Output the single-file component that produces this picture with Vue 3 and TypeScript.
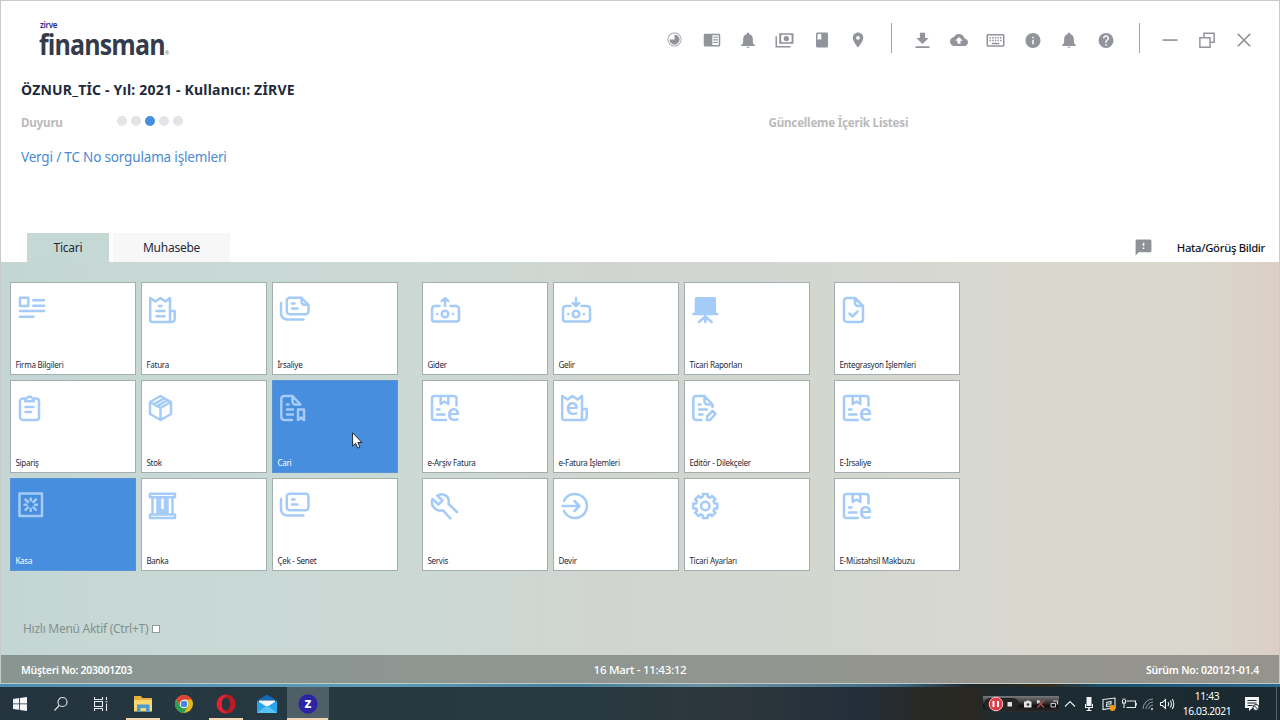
<template>
  <div class="desktop">
    <div class="window">
      <header class="topbar">
        <div class="logo">
          <span class="logo-small">zirve</span>
          <span class="logo-main">finansman</span>
          <span class="logo-reg">®</span>
        </div>
        <nav class="tools">
          <template v-for="(tool, i) in tools" :key="i">
            <span v-if="tool.divider" class="divider"></span>
            <button class="tool" type="button">
              <svg viewBox="0 0 24 24" :class="tool.cls">
                <path :d="tool.d" fill-rule="evenodd" />
              </svg>
            </button>
          </template>
        </nav>
      </header>

      <h1 class="company">ÖZNUR_TİC - Yıl: 2021 - Kullanıcı: ZİRVE</h1>

      <section class="news">
        <div class="news-left">
          <div class="news-head">
            <span class="muted duyuru">Duyuru</span>
            <span class="dots">
              <i v-for="n in 5" :key="n" class="dot" :class="{ active: n === 3 }"></i>
            </span>
          </div>
          <a class="news-link">Vergi / TC No sorgulama işlemleri</a>
        </div>
        <div class="news-right">
          <span class="muted">Güncelleme İçerik Listesi</span>
        </div>
      </section>

      <div class="tabs">
        <div class="tab ticari active"><span>Ticari</span></div>
        <div class="tab muhasebe"><span>Muhasebe</span></div>
        <div class="feedback">
          <svg viewBox="0 0 24 24"><path d="M20 2H4c-1.1 0-2 .9-2 2v18l4-4h14c1.1 0 2-.9 2-2V4c0-1.100-.9-2-2-2zm-7 12h-2v-2h2v2zm0-4h-2V6h2v4z" /></svg>
          <span>Hata/Görüş Bildir</span>
        </div>
      </div>

      <main class="panel">
        <div class="groups">
          <div v-for="(group, g) in groups" :key="g" class="group" :class="{ single: group.length === 3 }">
            <div v-for="tile in group" :key="tile.label" class="tile" :class="{ selected: tile.selected }">
              <svg class="tile-icon" viewBox="0 0 36 36" width="36" height="36">
                <path class="line" :d="icons[tile.icon].d" />
                <path v-if="icons[tile.icon].fill" class="solid" :d="icons[tile.icon].fill" />
                <text v-if="icons[tile.icon].e" class="letter" :x="icons[tile.icon].e?.[0]" :y="icons[tile.icon].e?.[1]">e</text>
              </svg>
              <span class="tile-label">{{ tile.label }}</span>
            </div>
          </div>
        </div>
        <label class="quick">
          <span>Hızlı Menü Aktif (Ctrl+T)</span>
          <i class="check"></i>
        </label>
      </main>

      <footer class="status">
        <span class="customer">Müşteri No: 203001Z03</span>
        <span class="date">16 Mart - 11:43:12</span>
        <span class="version">Sürüm No: 020121-01.4</span>
      </footer>
    </div>

    <div class="taskbar">
      <div class="apps">
        <div class="app">
          <svg width="16" height="16" viewBox="0 0 16 16"><path fill="#f4f6f7" d="M1 3l6-.9v5.400H1zM7.800 2L15 1v6.500H7.800zM1 8.300h6v5.400L1 12.900zM7.800 8.300H15V15l-7.200-1z" /></svg>
        </div>
        <div class="app">
          <svg width="16" height="16" viewBox="0 0 16 16" class="thin"><circle cx="9.500" cy="6" r="4.500" /><path d="M6.200 9.500L1.500 14.500" /></svg>
        </div>
        <div class="app">
          <svg width="16" height="16" viewBox="0 0 16 16" class="thin"><path d="M.500 1v2.500h8V1M.500 15v-2.500h8V15M.500 5.500h8v5h-8zM12.500 1v3M12.500 7.500V15M11.500 5.800h2" /></svg>
        </div>
        <div class="app open">
          <svg width="20" height="18" viewBox="0 0 20 18">
            <path fill="#e9ae3b" d="M1 1h7l1.500 2H19v5H1z" />
            <path fill="#fbd76f" d="M1 5h18v11.500H1z" />
            <path fill="#4a9bd4" d="M4 9.500h12.500V17H13v-4H7.500v4H4z" />
          </svg>
        </div>
        <div class="app">
          <svg width="20" height="20" viewBox="0 0 20 20">
            <circle cx="10" cy="10" r="9" fill="#e2b71f" />
            <path fill="#dc4437" d="M2.200 5.500A9 9 0 0 1 17.800 5.500H10L6.100 12.200z" />
            <path fill="#2f9e55" d="M2.200 5.500A9 9 0 0 0 10 19l3.900-6.800H6.100z" />
            <circle cx="10" cy="10" r="4.300" fill="#fff" /><circle cx="10" cy="10" r="3.300" fill="#4386e8" />
          </svg>
        </div>
        <div class="app open">
          <svg width="20" height="20" viewBox="0 0 20 20">
            <path fill="#e5222e" fill-rule="evenodd" d="M10 .500a9.500 9.500 0 1 0 0 19a9.500 9.500 0 0 0 0-19zM10 3.200c2.600 0 4.200 3 4.200 6.800s-1.600 6.800-4.200 6.800S5.800 13.800 5.800 10s1.600-6.800 4.200-6.800z" />
            <path fill="#b81a26" d="M13 1.100A9.500 9.500 0 0 1 13 18.900c-1.500.3-3-.5-3.900-2.200c3 .6 5.100-2.700 5.100-6.700s-2.100-7.300-5.100-6.700C10 1.600 11.500.800 13 1.100z" />
          </svg>
        </div>
        <div class="app">
          <svg width="22" height="20" viewBox="0 0 22 20">
            <path fill="#1569b3" d="M1 6.500L11 .500l10 6z" />
            <path fill="#f2f6fa" d="M3 6.500h16v6H3z" />
            <path fill="#2aa3ea" d="M1 6.500l10 6.500 10-6.500V19H1z" />
            <path fill="#56c4f7" d="M1 19l9-7 2 0 9 7z" />
          </svg>
        </div>
        <div class="app open current">
          <svg width="20" height="20" viewBox="0 0 20 20">
            <circle cx="10" cy="10" r="9.700" fill="#2b24a5" />
            <text x="10" y="14" class="zed">z</text>
          </svg>
        </div>
      </div>

      <div class="tray">
        <div class="recorder">
          <svg width="76" height="16" viewBox="0 0 76 16">
            <rect x="1" y="2" width="35" height="12" rx="6" fill="#252525" />
            <circle cx="13" cy="8" r="6.800" fill="#e23c46" stroke="#f3c4c6" />
            <path d="M10.500 5v6M15 5v6" stroke="#fff" stroke-width="2" />
            <path fill="#e4e4e4" d="M24.500 6h4.500v4.500h-4.500zM41 5.500h2l1-1h2l1 1h1.500v6H41z" />
            <circle cx="45" cy="8.500" r="1.300" fill="#333" />
            <path d="M54 4.500l4 4 3 3M61.500 4l-7 7.500" stroke="#c65050" stroke-width="1.200" />
            <path d="M54 4v4l4-3z" fill="#ddd" />
            <path d="M68 7.500h4.500v3.500H68zM70 5h4.500v3.500" stroke="#ccc" fill="none" />
          </svg>
        </div>
        <svg class="thin chevron" width="12" height="16" viewBox="0 0 12 16"><path d="M1 10.500l5-5 5 5" /></svg>
        <svg class="mic" width="12" height="16" viewBox="0 0 12 16"><path fill="#eef1f3" d="M3.500 1h5v9h-5zM2 8h1v3h6V8h1v4H6.800v2H8.500v1h-5v-1h1.700v-2H2z" /></svg>
        <svg class="thin" width="16" height="16" viewBox="0 0 16 16"><path d="M2 3.500l12-1.500v9.500L2 13.500zM5 6.500l5-1v2.500H5.500v2.500l5-.5" /><circle cx="11.500" cy="12" r="3" fill="#f39a1d" stroke="none" /></svg>
        <svg class="thin" width="16" height="16" viewBox="0 0 16 16"><path d="M5.500 5h9v6.500h-9M15.300 7v2.500M1.500 4v3h3V4M3 7v5M2.200 2.500V4M3.900 2.500V4" /></svg>
        <svg class="wifi" width="14" height="16" viewBox="0 0 14 16"><path d="M2 13A10 10 0 0 1 12 3M5 13a7.500 7.500 0 0 1 7-7M7.500 13A5 5 0 0 1 12 9" /><circle cx="11" cy="13" r="1.200" /></svg>
        <svg class="thin" width="16" height="16" viewBox="0 0 16 16"><path d="M1.500 6.500h2l3-3v9l-3-3h-2zM9 6q1.300 2 0 4M11.300 4.500q2.200 3.500 0 7M13.300 3q3 5 0 10" /></svg>
        <div class="clock"><span>11:43</span><span>16.03.2021</span></div>
        <svg class="notify" width="16" height="16" viewBox="0 0 16 16">
          <path fill="#f3f5f6" d="M1 1h14v11H8.500L5 15v-3H1z" />
          <path d="M3.500 4.500h9M3.500 7h9M3.500 9.500h5" stroke="#1c2930" />
          <circle cx="12" cy="11.500" r="3" fill="#f3f5f6" stroke="#1c2930" /><path d="M10 9.500l4 4" stroke="#1c2930" />
        </svg>
        <i class="peek"></i>
      </div>
    </div>

    <svg class="cursor" width="12" height="18" viewBox="0 0 12 18">
      <path d="M.600.800v13.300l3-2.800 2.100 4.800 2.200-1-2.100-4.600h4.100z" />
    </svg>
  </div>
</template>

<script setup lang="ts">
interface Tool {
  d: string
  cls?: string
  divider?: boolean
}

interface Icon {
  d: string
  fill?: string
  e?: [number, number]
}

interface Tile {
  label: string
  icon: string
  selected?: boolean
}

const bell = 'M12 22.500c1.100 0 2-.7 2-1.500h-4c0 .8.9 1.500 2 1.500zM18.500 16v-5.500c0-3.100-2-5.700-5-6.400V3.500a1.500 1.500 0 0 0-3 0v.6c-3 .7-5 3.300-5 6.400V16l-2.500 2.500V20h18v-1.500z'

const tools: Tool[] = [
  { cls: 'pie', d: 'M12 .8a11.200 11.200 0 1 0 0 22.400a11.200 11.200 0 0 0 0-22.400zM12 2a10 10 0 1 1 0 20a10 10 0 0 1 0-20zM12 3.800V12H3.800A8.200 8.200 0 1 0 12 3.800z' },
  { d: 'M3 3.500h18c1.100 0 2 .9 2 2v13c0 1.100-.9 2-2 2H3c-1.100 0-2-.9-2-2v-13c0-1.100.9-2 2-2zM12.500 5.500v13H21v-13zM13.500 7.500H20V9h-6.500zM13.500 11H20v1.500h-6.500zM13.500 14.500H20V16h-6.500z' },
  { d: bell },
  { cls: 'wide', d: 'M5 3h19v14H5zM7.500 7v6A2 2 0 0 0 9 15h11a2 2 0 0 0 1.500-2V7A2 2 0 0 0 20 5H9a2 2 0 0 0-1.500 2zM14.500 6.500a3.500 3.500 0 1 1 0 7a3.500 3.500 0 0 1 0-7zM0 7h2v13h18v2H0z' },
  { d: 'M18 2H6c-1.100 0-2 .9-2 2v16c0 1.100.9 2 2 2h12c1.100 0 2-.9 2-2V4c0-1.100-.9-2-2-2zM6 4h5v8l-2.500-1.500L6 12V4z' },
  { d: 'M12 2C8.130 2 5 5.130 5 9c0 5.250 7 13 7 13s7-7.750 7-13c0-3.870-3.130-7-7-7zm0 9.500a2.500 2.500 0 0 1 0-5a2.500 2.500 0 0 1 0 5z' },
  { divider: true, cls: 'big', d: 'M19 9h-4V3H9v6H5l7 7 7-7zM4 18.500v2h16v-2H4z' },
  { d: 'M19.350 10.040C18.670 6.590 15.640 4 12 4 9.110 4 6.600 5.640 5.350 8.040 2.340 8.360 0 10.910 0 14c0 3.310 2.690 6 6 6h13c2.760 0 5-2.240 5-5 0-2.640-2.050-4.780-4.650-4.960zM14 13v4h-4v-4H7l5-5 5 5h-3z' },
  { cls: 'wide', d: 'M22 4H2C.9 4 0 4.900 0 6v13c0 1.100.9 2 2 2h20c1.100 0 2-.9 2-2V6c0-1.100-.9-2-2-2zM2 6h20v13H2zM4 8h2v2H4zM7.500 8h2v2h-2zM11 8h2v2h-2zM14.500 8h2v2h-2zM18 8h2v2h-2zM4 11.500h2v2H4zM7.500 11.500h2v2h-2zM11 11.500h2v2h-2zM14.500 11.500h2v2h-2zM18 11.500h2v2h-2zM7 15.500h10v2H7z' },
  { d: 'M12 2.500C6.480 2.500 2 7 2 12.500s4.480 10 10 10 10-4.480 10-10-4.480-10-10-10zm1 15h-2v-6h2v6zm0-8h-2v-2h2v2z' },
  { d: bell },
  { d: 'M12 2.500a10 10 0 1 0 0 20a10 10 0 0 0 0-20zm1 17h-2v-2h2v2zm2.070-7.750l-.9.920C13.450 13.400 13 14 13 15.500h-2v-.5c0-1.100.450-2.100 1.170-2.830l1.240-1.260c.370-.360.590-.860.590-1.410 0-1.100-.9-2-2-2s-2 .9-2 2H8c0-2.210 1.790-4 4-4s4 1.790 4 4c0 .880-.360 1.680-.930 2.250z' },
  { divider: true, d: 'M2 11h20v2.200H2z' },
  { d: 'M7 2h15.500v14H17v6.500H1.500V8H7zM9 4v4h8v6h3.500V4zM3.500 10v10.500H15V10z' },
  { d: 'M4.500 3L12 10.500 19.500 3 21 4.500 13.500 12 21 19.500 19.500 21 12 13.500 4.500 21 3 19.500 10.500 12 3 4.500z' },
]

// toothed outline for the settings tile
const gear = (cx: number, cy: number): string => {
  const pts: string[] = []
  for (let i = 0; i < 8; i++) {
    const base = (i * Math.PI) / 4
    const steps: [number, number][] = [[-0.25, 9.6], [-0.2, 12.2], [0.2, 12.2], [0.25, 9.6]]
    for (const [a, r] of steps) {
      pts.push(`${(cx + r * Math.sin(base + a)).toFixed(2)} ${(cy - r * Math.cos(base + a)).toFixed(2)}`)
    }
  }
  return `M${pts.join('L')}z`
}

const receipt = 'M3.200 4v22a2 2 0 0 0 2 2h19.500a3 3 0 0 0 3-3v-8h-4.700M23 28V4l-4.500 3.500-5-3.500-5 3.500L3.200 4'
const archive = 'M18 28H6.500a2.500 2.500 0 0 1-2.500-2.500v-19A2.500 2.500 0 0 1 6.500 4h19.500A2.500 2.500 0 0 1 28.500 6.500v7M12.700 4v8l3.800-2.500 3.800 2.500V4M9 17.500h2.500M9 22.500h7.500'
const backPage = 'M3 9v10.500a6 6 0 0 0 6 6h16.500'
const card = 'M11.500 12H6.700a2.700 2.700 0 0 0-2.700 2.700v10.200a2.700 2.700 0 0 0 2.700 2.700h21.600a2.700 2.700 0 0 0 2.700-2.700V14.700a2.700 2.700 0 0 0-2.700-2.700H22.500M20.300 20a3.300 3.300 0 1 1-6.600 0a3.300 3.300 0 1 1 6.600 0zM9.300 20h.100M25 20h.100'

const icons: Record<string, Icon> = {
  firma: { d: 'M4 3.800h8.300v8.300H4zM17.300 6.300H28M17.300 11.700H28M4 17H28M4 22.700H17.500' },
  fatura: { d: receipt + 'M12 12h2.500M9.500 17h8M9.500 22.300h8' },
  irsaliye: { d: backPage + 'M11.500 3.800H23.500l7 7.200v6.500a2.700 2.700 0 0 1-2.700 2.700H11.500a2.700 2.700 0 0 1-2.700-2.700v-11a2.700 2.700 0 0 1 2.700-2.700zM23.500 3.800v4a3 3 0 0 0 3 3h4M14 9.500h2.500M14 14.500h5.500' },
  siparis: { d: 'M9 6.500H6.700A2.700 2.700 0 0 0 4 9.200v16.100A2.700 2.700 0 0 0 6.700 28H20.300A2.700 2.700 0 0 0 23 25.300V9.200a2.700 2.700 0 0 0-2.700-2.700H18M9.200 9.200V6.500h1.500a3 3 0 0 1 5.600 0h1.500v2.700zM9.500 15h8M9.500 20h5.500' },
  stok: { d: 'M13.500 4l10.500 6v12l-10.500 6L3 22V10zM3 10l10.500 6L24 10M13.500 16v12M7 12.200l10.500-6M10.200 14.200l10.500-6' },
  cari: { d: 'M14 28H6a2.700 2.700 0 0 1-2.700-2.700V6.700A2.700 2.700 0 0 1 6 4h8.500l8 8.500H17.500a3 3 0 0 1-3-3V4M9 12.500h1.500M9 17.500h6M9 22.500h6M20 17.500h6V28l-3-2.500-3 2.500z' },
  kasa: { d: 'M3.500 3.500h22.500v22.500H3.500zM14.700 8.500v2M14.700 19v2M8.500 14.700h2M19 14.700h2M9.500 9.500l2.500 2.500M19.900 9.500l-2.500 2.500M9.500 19.900l2.500-2.500M19.900 19.900l-2.500-2.500' },
  banka: { d: 'M3 3.800h25v3.500H3zM3 24.500h25v3.500H3zM5.500 7.500v17M10.500 7.500v17M13 7.500v17M18 7.500v17M20.500 7.500v17M25.500 7.500v17', fill: 'M14 19h3v5h-3z' },
  cek: { d: backPage + 'M11.500 3.800H27.700a2.700 2.700 0 0 1 2.700 2.700v11a2.700 2.700 0 0 1-2.700 2.700H11.500a2.700 2.700 0 0 1-2.700-2.700v-11a2.700 2.700 0 0 1 2.700-2.700zM14 9.500h2.500M14 14.500h5.500' },
  gider: { d: card + 'M17 12V4.200M13.700 7.200l3.300-3 3.300 3' },
  gelir: { d: card + 'M17 4v8M13.700 9l3.300 3 3.300-3' },
  rapor: { d: 'M15.300 20v8M15.300 22.500L9 28M15.300 22.500l6.300 5.500M3.300 20h24', fill: 'M4.700 5a2 2 0 0 1 2-2H24a2 2 0 0 1 2 2v15H4.700z' },
  arsiv: { d: archive, e: [25.3, 28.8] },
  efatura: { d: receipt, e: [13.2, 22.8] },
  editor: { d: 'M11.500 28H6a2.700 2.700 0 0 1-2.700-2.700V6.700A2.700 2.700 0 0 1 6 4h8.500l8 8.500H17.500a3 3 0 0 1-3-3V4M22.500 12.500V15M9 12.500h1.500M9 17.500h8M9 22.500h3.500M17 28v-3.500l5.500-5.500 3 3-5.500 6z' },
  servis: { d: 'M4.500 9l6 5.500 4-4L9.300 5.500c6-3.500 13 1 11.200 8.500L29 22M4.500 9c-2.500 7 3.500 13 10.500 11.300L22.500 28.500' },
  devir: { d: 'M5 11A12 12 0 1 1 5 21M3.500 16h17M15.500 11l5 5-5 5' },
  ayarlar: { d: gear(15.300, 16) + 'M19.500 16a4.200 4.200 0 1 1-8.400 0a4.200 4.200 0 1 1 8.400 0z' },
  entegrasyon: { d: 'M15 4H6.700A2.700 2.700 0 0 0 4 6.700v18.600A2.700 2.700 0 0 0 6.700 28h13.600a2.700 2.700 0 0 0 2.700-2.700V12zM15 4v5a3 3 0 0 0 3 3h5M9.500 19.500l3 3 5-5' },
}

const groups: Tile[][] = [
  [
    { label: 'Firma Bilgileri', icon: 'firma' },
    { label: 'Fatura', icon: 'fatura' },
    { label: 'İrsaliye', icon: 'irsaliye' },
    { label: 'Sipariş', icon: 'siparis' },
    { label: 'Stok', icon: 'stok' },
    { label: 'Cari', icon: 'cari', selected: true },
    { label: 'Kasa', icon: 'kasa', selected: true },
    { label: 'Banka', icon: 'banka' },
    { label: 'Çek - Senet', icon: 'cek' },
  ],
  [
    { label: 'Gider', icon: 'gider' },
    { label: 'Gelir', icon: 'gelir' },
    { label: 'Ticari Raporları', icon: 'rapor' },
    { label: 'e-Arşiv Fatura', icon: 'arsiv' },
    { label: 'e-Fatura İşlemleri', icon: 'efatura' },
    { label: 'Editör - Dilekçeler', icon: 'editor' },
    { label: 'Servis', icon: 'servis' },
    { label: 'Devir', icon: 'devir' },
    { label: 'Ticari Ayarları', icon: 'ayarlar' },
  ],
  [
    { label: 'Entegrasyon İşlemleri', icon: 'entegrasyon' },
    { label: 'E-İrsaliye', icon: 'arsiv' },
    { label: 'E-Müstahsil Makbuzu', icon: 'arsiv' },
  ],
]
</script>

<style>
body {
  margin: 0;
  overflow: hidden;
}
</style>

<style scoped>
.desktop {
  position: relative;
  width: 1280px;
  height: 720px;
  display: flex;
  flex-direction: column;
  font-family: 'Noto Sans', 'Open Sans', sans-serif;
  color: #1d2a3c;
  background: #fff;
  overflow: hidden;
  white-space: nowrap;
}

.window {
  height: 684px;
  box-sizing: border-box;
  border: 1px solid #c6caca;
  border-bottom-color: #c4ccc8;
  display: flex;
  flex-direction: column;
}

.topbar {
  height: 76px;
  display: flex;
  justify-content: space-between;
}

.logo {
  display: grid;
  grid-template-columns: 125px 10px;
  grid-template-rows: 10px 28px;
  padding: 19px 0 0 38px;
}

.logo-small {
  grid-column: 1 / 3;
  padding-left: 1px;
  font-size: 8px;
  line-height: 10px;
  font-weight: 600;
  letter-spacing: -0.3px;
  color: #2b2a8c;
}

.logo-main {
  font-family: 'Open Sans', sans-serif;
  font-size: 29px;
  line-height: 27px;
  font-weight: 700;
  letter-spacing: -1px;
  color: #343b4b;
  transform: scaleX(0.86);
  transform-origin: left;
}

.logo-reg {
  align-self: end;
  padding-left: 1px;
  font-size: 5px;
  line-height: 10px;
  color: #777;
}

.tools {
  display: flex;
  align-items: flex-start;
  padding: 21px 17px 0 0;
}

.tool {
  width: 36.7px;
  height: 36px;
  padding: 0;
  border: 0;
  background: none;
  display: flex;
  align-items: center;
  justify-content: center;
}

.tool svg {
  width: 18px;
  height: 18px;
  fill: #92949b;
}

.tool svg.wide {
  width: 19px;
}

.tool svg.big {
  width: 21px;
  height: 21px;
}

.tool svg.pie {
  width: 15px;
  height: 15px;
  margin-bottom: 2px;
}

.divider {
  width: 1px;
  height: 30px;
  margin: 1px 12px 0 14.6px;
  background: #a3a5aa;
}

.company {
  margin: 0;
  height: 28px;
  padding-left: 20px;
  font-size: 14px;
  line-height: 25px;
  font-weight: 700;
  letter-spacing: 0.2px;
}

.news {
  display: flex;
  height: 128px;
}

.news-left {
  width: 747.5px;
  padding-left: 20px;
}

.news-head {
  display: flex;
  height: 36px;
  align-items: flex-start;
}

.muted {
  font-size: 11.6px;
  line-height: 35px;
  font-weight: 700;
  color: #bababa;
  letter-spacing: -0.2px;
}

.duyuru {
  width: 96px;
}

.dots {
  display: flex;
  gap: 4px;
  padding-top: 11px;
}

.dot {
  width: 10px;
  height: 10px;
  border-radius: 50%;
  background: #e3e4e8;
}

.dot.active {
  background: #478edf;
}

.news-link {
  display: block;
  font-size: 13.5px;
  line-height: 32px;
  letter-spacing: -0.17px;
  color: #4a8ad0;
}

.tabs {
  height: 29px;
  display: flex;
  padding-left: 26px;
  font-size: 12px;
  line-height: 29px;
  letter-spacing: -0.25px;
}

.tab {
  text-align: center;
  background: #f7f7f8;
}

.ticari {
  width: 82px;
}

.ticari.active {
  background: #c5d8d4;
}

.muhasebe {
  width: 117px;
  margin-left: 4px;
}

.feedback {
  margin-left: auto;
  padding-right: 14px;
  display: flex;
  align-items: center;
  gap: 24px;
  font-size: 11.3px;
  font-weight: 500;
  letter-spacing: -0.33px;
  color: #11151b;
}

.feedback svg {
  width: 19px;
  height: 19px;
  fill: #8f9198;
}

.panel {
  flex: 1;
  padding: 20px 0 0 9px;
  background: linear-gradient(90deg, #c3d6d4 0, #c7d8d4 120px, #cbd9d5 400px, #d1d5d0 600px, #d4d7d0 850px, #d8d8d0 1000px, #d9d8cf 1180px, #dbd2c8 1250px, #dccfc5 1279px);
}

.groups {
  display: flex;
  gap: 24px;
  height: 334px;
}

.group {
  display: grid;
  grid-template-columns: repeat(3, 126px);
  grid-auto-rows: 93px;
  gap: 5px;
}

.group.single {
  grid-template-columns: 126px;
}

.tile {
  box-sizing: border-box;
  border: 1px solid #a4aeac;
  background: #fff;
  padding: 11px 0 0 4px;
  display: flex;
  flex-direction: column;
}

.tile-icon {
  display: block;
  flex: none;
  margin-left: 1px;
  overflow: visible;
}

.tile-icon .line {
  fill: none;
  stroke: #a5cbf8;
  stroke-width: 2.5;
  stroke-linecap: round;
  stroke-linejoin: round;
}

.tile-icon .solid {
  fill: #a5cbf8;
}

.tile-icon .letter {
  font-size: 22.5px;
  font-weight: 600;
  fill: #a5cbf8;
  text-anchor: middle;
}

.tile-label {
  margin-top: 29px;
  padding-left: 0.4px;
  font-size: 8px;
  line-height: 12px;
  letter-spacing: -0.25px;
}

.tile.selected {
  background: #478edf;
  border-color: #5a94d4;
  color: #fff;
}

.quick {
  display: flex;
  align-items: center;
  gap: 4px;
  padding-left: 13px;
  font-size: 12px;
  line-height: 26px;
  letter-spacing: -0.27px;
  color: #85908e;
}

.check {
  width: 6px;
  height: 6px;
  border: 1px solid #8f9997;
  background: #fff;
}

.status {
  height: 28px;
  box-sizing: border-box;
  display: grid;
  grid-template-columns: 1fr auto 1fr;
  align-items: center;
  padding: 1px 20px 0 20px;
  font-size: 10.5px;
  font-weight: 600;
  letter-spacing: -0.26px;
  color: #fff;
  background: linear-gradient(90deg, #899591, #8e9691 40%, #94958f 70%, #94938c);
}

.date {
  font-size: 11.6px;
  font-weight: 500;
  letter-spacing: -0.33px;
}

.version {
  text-align: right;
  letter-spacing: -0.2px;
}

.taskbar {
  height: 36px;
  box-sizing: border-box;
  border-top: 3px solid #4a87a8;
  border-image: linear-gradient(90deg, #4d8fb4, #5d9bb8 30%, #47809e 45%, #6b94a5 55%, #3e6a86 70%, #1e2427 76%, #332d1e 82%, #17506e 86%, #2b6a8c) 1;
  display: flex;
  justify-content: space-between;
  background: linear-gradient(90deg, #23343f 0, #263840 300px, #273a40 560px, #2c363b 740px, #222f3b 860px, #282925 920px, #292821 975px, #1d2b32 1000px, #1b2931 1280px);
}

.apps {
  display: flex;
  margin-left: -1px;
}

.app {
  width: 41.200px;
  height: 33px;
  box-sizing: border-box;
  display: flex;
  align-items: center;
  justify-content: center;
}

.app.open {
  background: linear-gradient(#f3d7b3, #f3d7b3) center bottom / 34px 2px no-repeat;
}

.app.open.current {
  background: linear-gradient(#f3d7b3, #f3d7b3) center bottom / 41px 2px no-repeat, #4f5f67;
}

.zed {
  font-size: 14px;
  font-weight: 700;
  fill: #fff;
  text-anchor: middle;
}

.thin {
  fill: none;
  stroke: #e6eaec;
  stroke-width: 1.1;
}

.tray {
  display: flex;
  align-items: center;
  gap: 4px;
  padding-right: 3px;
}

.recorder {
  width: 76px;
  height: 16px;
  background: linear-gradient(#77797b, #2f3031 45%, #111 60%, #2c2d2e);
}

.recorder svg {
  display: block;
}

.chevron {
  margin: 0 3px 0 1px;
}

.mic {
  margin-right: 2px;
}

.wifi {
  fill: #aab2b6;
}

.wifi path {
  fill: none;
  stroke: #8f999e;
}

.clock {
  width: 56px;
  display: flex;
  flex-direction: column;
  align-items: center;
  font-size: 10.2px;
  line-height: 15px;
  letter-spacing: -0.35px;
  color: #fff;
}

.notify {
  margin: 0 12px 0 5px;
}

.peek {
  width: 1px;
  height: 33px;
  background: #53616a;
}

.cursor {
  position: absolute;
  left: 352px;
  top: 432px;
}

.cursor path {
  fill: #fff;
  stroke: #1a1a1a;
  stroke-width: 0.9;
}
</style>
